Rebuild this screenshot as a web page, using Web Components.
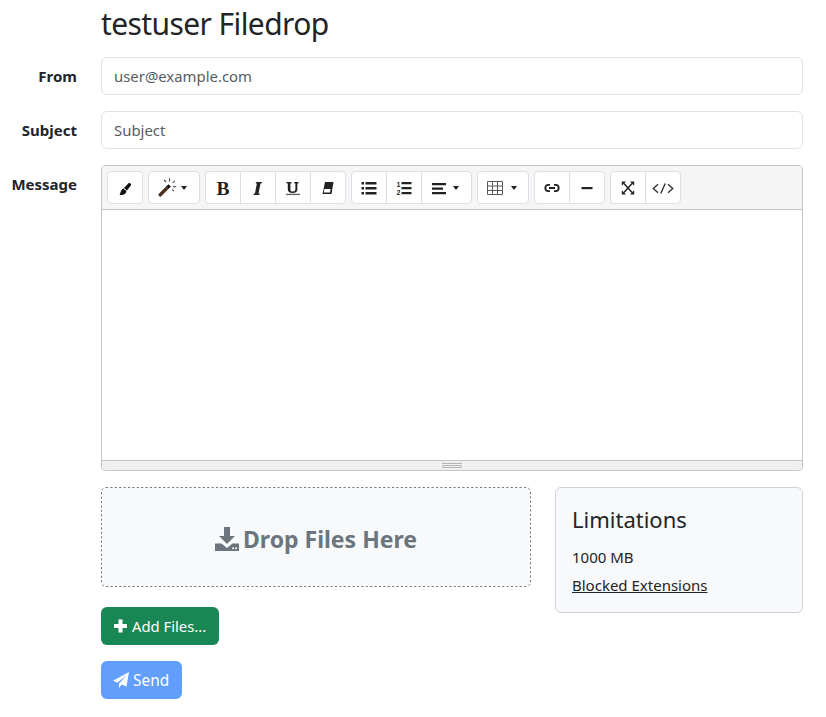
<!DOCTYPE html>
<html lang="en">
<head>
<meta charset="utf-8">
<title>testuser Filedrop</title>
<style>
  html, body { margin: 0; background: #fff; }
  body { font-family: "Noto Sans", "Open Sans", sans-serif; font-size: 16px; color: #212529; }
</style>
</head>
<body>
<filedrop-page>
  <form-row label="From"><text-field value="user@example.com"></text-field></form-row>
  <form-row label="Subject"><text-field value="Subject"></text-field></form-row>
  <form-row label="Message"><note-editor></note-editor></form-row>
  <form-row>
    <upload-area>
      <drop-zone slot="drop"></drop-zone>
      <limits-card slot="card"></limits-card>
      <action-button slot="add" kind="add" label="Add Files..."></action-button>
    </upload-area>
  </form-row>
  <form-row><action-button kind="send" label="Send"></action-button></form-row>
</filedrop-page>

<script>
const sharedFont = '"Noto Sans", "Open Sans", sans-serif';

class FiledropPage extends HTMLElement {
  constructor() {
    super();
    this.attachShadow({ mode: 'open' }).innerHTML = `
      <style>
        :host { display: block; padding: 0 23px 18px 0; }
        h2 { margin: 0 0 11px 101px; padding-top: 2px; font: 400 30px/44px ${sharedFont}; letter-spacing: -.6px; height: 44px; }
        .rows { display: flex; flex-direction: column; gap: 16px; }
      </style>
      <h2>testuser Filedrop</h2>
      <div class="rows"><slot></slot></div>`;
  }
}

class FormRow extends HTMLElement {
  constructor() {
    super();
    const label = this.getAttribute('label') || '';
    this.attachShadow({ mode: 'open' }).innerHTML = `
      <style>
        :host { display: grid; grid-template-columns: 77px 1fr; column-gap: 24px; }
        .lbl { text-align: right; font-weight: 700; font-size: 15px; line-height: 24px; padding-top: 7px; white-space: nowrap; }
      </style>
      <div class="lbl">${label}</div>
      <div><slot></slot></div>`;
  }
}

class TextField extends HTMLElement {
  constructor() {
    super();
    this.attachShadow({ mode: 'open' }).innerHTML = `
      <style>
        :host { display: block; box-sizing: border-box; height: 38px; border: 1px solid #dee2e6; border-radius: 6px;
                padding: 6px 12px; font-size: 14.9px; line-height: 24px; color: #595c5f; background: #fff; }
      </style>
      ${this.getAttribute('value')}`;
  }
}

// toolbar glyphs, all on a 16 high box
const icons = {
  brush: '<path d="M11.500 3.200c1-1 3.200.6 2.500 2L10 10.500 7 8zM6.500 8.700l3 2.400c-.2 2.300-1.800 3.900-4.500 3.900-1 0-2-.1-2.500-.5 1-1 .9-2.200 1.500-3.500.6-1.400 1.500-2.200 2.500-2.800z" fill="#111"/>',
  wand: '<path d="M.5 13.500 6.800 7.200l2 2L2.500 15.500c-.3.300-.8.300-1.100 0l-.9-.9c-.3-.3-.3-.8 0-1.100z" fill="#4a3020"/><path d="M6.800 7.200l2-2 2 2-2 2z" fill="#111"/><path d="M9.200.3h1v2.600h-1zM13.800 2l.7.7-1.800 1.800-.7-.7zM12.500 6.700h2.800v1.100h-2.800zM4.800 2l.8-.7 1.500 1.700-.8.700zM11.700 10l.8-.7 1.300 1.400-.8.700z" fill="#555"/>',
  bold: '<text x="8" y="15" text-anchor="middle" font-family="Liberation Serif" font-weight="700" font-size="19.500">B</text>',
  italic: '<path d="M6 2h6l-.3 1.200-1.200.4-2 9.800 1.200.4-.3 1.200H3.400l.3-1.200 1.200-.4 2-9.800-1.200-.4z"/>',
  under: '<path d="M1.300 2h5.200v1.200l-1.100.3v5.800c0 1.600.8 2.300 2.400 2.300 1.700 0 2.600-.8 2.600-2.500V3.500l-1.200-.3V2h4.300v1.200l-1.100.3v5.700c0 2.500-1.600 3.800-4.600 3.800-3.300 0-5-1.200-5-3.700V3.500l-1.100-.3z"/><rect x="1" y="13.700" width="14" height="1.400" fill="#666"/>',
  eraser: '<path fill-rule="evenodd" d="M5 2h8.500l-2 12H2.500zM4.300 9l-.5 3.500h6.200l.6-3.500z"/>',
  ul: '<path d="M.5 2H3v2.500H.5zM4.500 2h11v2.500h-11zM.5 7H3v2.500H.5zM4.500 7h11v2.500h-11zM.5 12H3v2.500H.5zM4.500 12h11v2.500h-11z"/>',
  ol: '<path d="M5.500 2h10v2.200h-10zM5.500 7h10v2.200h-10zM5.500 12h10v2.200h-10z"/><text x=".5" y="7" font-family="Liberation Sans" font-weight="700" font-size="7">1</text><text x=".5" y="14.800" font-family="Liberation Sans" font-weight="700" font-size="7">2</text>',
  align: '<path d="M1 3h14v2.200H1zM1 7.500h11v2.200H1zM1 12h14v2.200H1z"/>',
  table: '<path d="M.5 1.500h15v13H.5zM5.500 1.500v13M10.500 1.500v13M.5 6h15M.5 10.500h15" fill="none" stroke="#5a5a5a"/>',
  link: '<path d="M7 4.800H5.500a3.200 3.200 0 0 0 0 6.400H7M11 4.800h1.500a3.200 3.200 0 0 1 0 6.400H11M6 8h6" fill="none" stroke="#222" stroke-width="1.800"/>',
  hr: '<rect x="2.500" y="7" width="11" height="2.200"/>',
  full: '<path d="M4 3.500 12 12.500M12 3.500 4 12.500" stroke="#222" stroke-width="1.500" fill="none"/><path d="M1.800 1.500h4.200L1.800 5.700zM14.200 1.500v4.200L10 1.500zM1.800 14.500v-4.200L6 14.500zM14.200 14.500H10l4.200-4.200z"/>',
  code: '<path d="M6 4.300 1.300 8.500 6 12.700M16 4.300l4.700 4.200L16 12.700M13.200 3.500 8.800 13.500" fill="none" stroke="#333" stroke-width="1.400"/>'
};

class NoteEditor extends HTMLElement {
  constructor() {
    super();
    // name, button width, caret, glyph width, viewBox width
    const groups = [
      [['brush', 36]],
      [['wand', 52, true, 19]],
      [['bold', 36], ['italic', 36], ['under', 36], ['eraser', 36]],
      [['ul', 36], ['ol', 36], ['align', 51, true]],
      [['table', 52, true]],
      [['link', 36, false, 18, 18], ['hr', 36]],
      [['full', 36], ['code', 36, false, 22, 22]]
    ];
    const html = groups.map(g => `<div class="group">${g.map(([name, w, caret, gw, vb]) => {
      const gh = name === 'wand' ? 19 : 16;
      return `<div class="btn${caret ? ' drop ' + name : ''}" style="width:${w}px">
        <svg viewBox="0 0 ${vb || 16} 16" width="${gw || 16}" height="${gh}" fill="#222">${icons[name]}</svg>
        ${caret ? '<i class="caret"></i>' : ''}
      </div>`;
    }).join('')}</div>`).join('');
    this.attachShadow({ mode: 'open' }).innerHTML = `
      <style>
        :host { box-sizing: border-box; height: 306px; border: 1px solid #c6c6c6; border-radius: 4px; overflow: hidden;
                display: flex; flex-direction: column; }
        svg { overflow: visible; }
        .toolbar { display: flex; gap: 5px; height: 44px; box-sizing: border-box; padding: 5px 5px 0; background: #f5f5f5;
                   border-bottom: 1px solid #c6c6c6; }
        .group { display: flex; height: 33px; }
        .btn { box-sizing: border-box; height: 33px; background: #fff; border: 1px solid #dae0e5; margin-left: -1px;
               display: flex; align-items: center; justify-content: center; }
        .btn.drop { justify-content: flex-start; padding-left: 9px; gap: 8px; }
        .btn.wand { gap: 4px; }
        .btn.align { gap: 6px; }
        .group .btn:first-child { margin-left: 0; border-radius: 4px 0 0 4px; }
        .group .btn:last-child { border-radius: 0 4px 4px 0; }
        .group .btn:only-child { border-radius: 4px; }
        .caret { width: 0; height: 0; border: 3.500px solid transparent; border-top: 4px solid #222; border-bottom: 0; }
        .area { flex: 1; background: #fff; }
        .status { height: 9px; background: #f0f0f0; border-top: 1px solid #c6c6c6; display: flex; justify-content: center; align-items: center; }
        .grip { width: 20px; height: 5px; background: repeating-linear-gradient(#b4b4b4 0 1px, transparent 1px 2px); }
      </style>
      <div class="toolbar">${html}</div>
      <div class="area"></div>
      <div class="status"><div class="grip"></div></div>`;
  }
}

class UploadArea extends HTMLElement {
  constructor() {
    super();
    this.attachShadow({ mode: 'open' }).innerHTML = `
      <style>
        :host { display: grid; grid-template-columns: 430px 248px; column-gap: 24px; }
        .left { display: flex; flex-direction: column; gap: 20px; }
      </style>
      <div class="left"><slot name="drop"></slot><div><slot name="add"></slot></div></div>
      <div><slot name="card"></slot></div>`;
  }
}

class DropZone extends HTMLElement {
  constructor() {
    super();
    this.attachShadow({ mode: 'open' }).innerHTML = `
      <style>
        :host { display: flex; position: relative; box-sizing: border-box; height: 100px; padding-top: 4px; border-radius: 5px; background: #f8f9fa;
                align-items: center; justify-content: center; gap: 4px; color: #6c757d; font-weight: 700; font-size: 23px; line-height: 32px; }
        svg.ico { fill: #6c757d; display: block; }
        svg.edge { position: absolute; inset: 0; width: 100%; height: 100%; }
        rect { fill: none; stroke: #6c757d; stroke-dasharray: 2 2.400; }
      </style>
      <svg class="edge"><rect x=".5" y=".5" rx="4.500" style="width:429px;height:99px"></rect></svg>
      <svg class="ico" viewBox="0 0 24 24" width="24" height="24">
        <path d="M9 0h6v9h5l-8 8-8-8h5z"/>
        <path d="M0 16.500h6.500L12 21l5.500-4.500H24V24H0z"/>
        <circle cx="18" cy="21.300" r="1" fill="#f8f9fa"/><circle cx="21" cy="21.300" r="1" fill="#f8f9fa"/>
      </svg>
      <span>Drop Files Here</span>`;
  }
}

class LimitsCard extends HTMLElement {
  constructor() {
    super();
    this.attachShadow({ mode: 'open' }).innerHTML = `
      <style>
        :host { display: block; box-sizing: border-box; height: 126px; padding: 15px 16px; border: 1px solid #ced4da; border-radius: 6px; background: #f8f9fa; font-size: 15px; }
        h5 { margin: 0 0 10px; font: 400 22px/32px ${sharedFont}; }
        p { margin: 0 0 4px; line-height: 24px; }
        a { color: inherit; text-decoration: underline; }
      </style>
      <h5>Limitations</h5>
      <p>1000 MB</p>
      <p><a href="#">Blocked Extensions</a></p>`;
  }
}

class ActionButton extends HTMLElement {
  constructor() {
    super();
    const kind = this.getAttribute('kind');
    const glyph = kind === 'add'
      ? '<path d="M5.500 1.500h4V6H14v4H9.500v4.500h-4V10H1V6h4.500z"/>'
      : '<path d="M16 0 13.500 14.500 8.600 12.400 6 16v-4.300L13.500 3 4.500 10.700 0 8.800z"/>';
    this.attachShadow({ mode: 'open' }).innerHTML = `
      <style>
        :host { display: inline-flex; align-items: center; box-sizing: border-box; height: 38px; padding: 0 12px; gap: 3px;
                border-radius: 6px; color: #fff; font-size: 14.8px; line-height: 24px; }
        :host([kind="add"]) { background: #198754; padding-right: 13px; }
        :host([kind="send"]) { background: #629efc; gap: 4px; padding-right: 13px; font-size: 15.4px; }
        span { position: relative; top: 0; }
        :host([kind="send"]) span { padding-top: 1px; }
        svg { fill: #fff; display: block; }
      </style>
      <svg viewBox="0 0 16 16" width="16" height="16">${glyph}</svg>
      <span>${this.getAttribute('label')}</span>`;
  }
}

customElements.define('filedrop-page', FiledropPage);
customElements.define('form-row', FormRow);
customElements.define('text-field', TextField);
customElements.define('note-editor', NoteEditor);
customElements.define('upload-area', UploadArea);
customElements.define('drop-zone', DropZone);
customElements.define('limits-card', LimitsCard);
customElements.define('action-button', ActionButton);
</script>
</body>
</html>
